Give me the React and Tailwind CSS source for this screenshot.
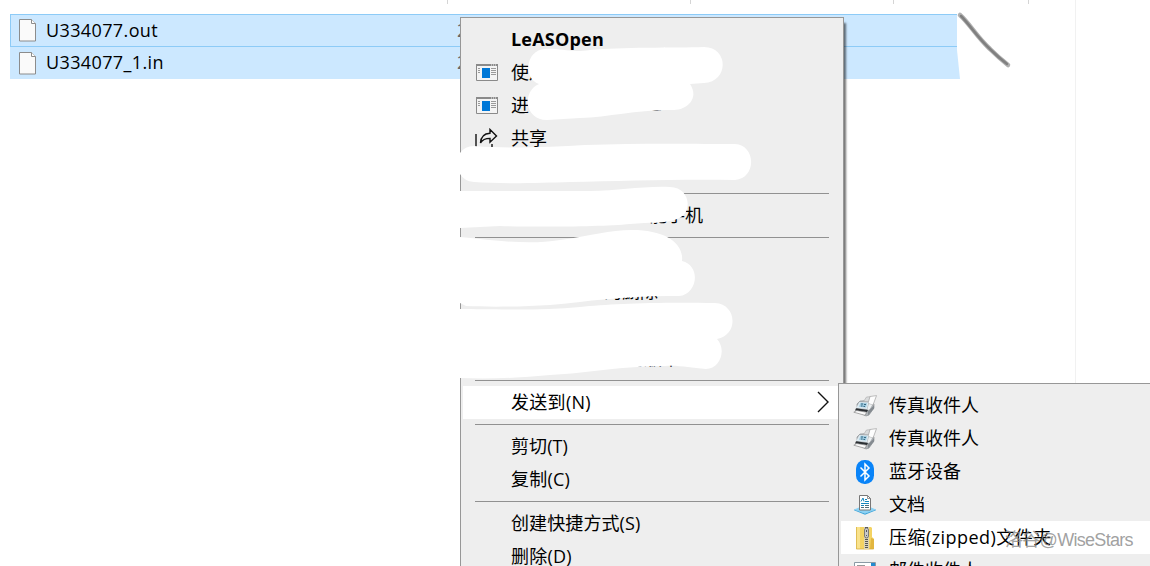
import React from 'react'
import clsx from 'clsx'

const FileIcon = () => (
  <svg width="18" height="23" viewBox="0 0 18 23" fill="none">
    <path d="M.5 .5h12l4 4v17.500H.5z" fill="#fafafa" stroke="#8c8c8c" />
    <path d="M12.500 .5v4h4" fill="#fff" stroke="#8c8c8c" />
  </svg>
)

const WindowIcon = () => (
  <svg width="22" height="17" viewBox="0 0 22 17">
    <path d="M.5 .5h21v16H.5z" fill="#f4f4f4" stroke="#8a8a8a" />
    <path d="M0 0h22v2H0z" fill="#8a8a8a" />
    <path d="M15 1h1m1 0h1m1 0h1" stroke="#eee" />
    <path d="M6 4h8v10H6z" fill="#0078d7" />
    <path d="M2 4.500h2M2 6.500h2M2 8.500h2M15 4.500h5M15 6.500h5M15 8.500h5M15 10.500h5" stroke="#9a9a9a" />
  </svg>
)

const ShareIcon = () => (
  <svg className="-ml-0.5" width="23" height="22" viewBox="0 0 23 22" fill="none" stroke="#111" strokeWidth="1.4">
    <path d="M1 6v15h16v-5" />
    <path d="M15 1.5l6.500 6.500-6.500 6.200v-3.800c-4.200 0-7.500 1-9.500 4.600C5.800 9 9.500 5.500 15 5.200z" />
  </svg>
)

const FaxIcon = () => (
  <svg width="24" height="22" viewBox="0 0 24 22" strokeLinejoin="round">
    <path d="M4 9l3-3 9-.5 5 3.500v4l-5 7-3 1-9-5z" fill="#aeb3b7" stroke="#83888c" strokeWidth=".6" />
    <path d="M10.500 6.500l3-4.500 3.500-.3-1 5z" fill="#d9dbdc" stroke="#aaa" strokeWidth=".6" />
    <path d="M15 8.500l2-7 6.500-.9-3.500 9.500z" fill="#fdfdfd" stroke="#a4a4a4" strokeWidth=".7" />
    <path d="M6.500 7l9 .5-1.500 6.500-11-1z" fill="#dceaf1" />
    <path d="M7.500 7.800l6.500.4-1 4.300-7-.8z" fill="#9bc8de" />
    <path d="M8 9h2m1 .5h2m-5 1.500h1.500m1 .5h1.500" stroke="#2f6078" strokeWidth=".9" />
    <path d="M15.800 9l3.500.8-3 5.200-2-.5z" fill="#edf0f1" />
    <path d="M3 13.200l12 1.800-1 2-12-1.500z" fill="#2b2f33" />
    <path d="M.8 17.200l3-1.700 10 1.800-2 3z" fill="#fafafa" stroke="#777" strokeWidth=".6" />
    <path d="M15 16l6-5.500v3L15 20.500z" fill="#858b90" />
  </svg>
)

const BluetoothIcon = () => (
  <svg width="18" height="24" viewBox="0 0 18 24" fill="none">
    <rect width="18" height="24" rx="8.500" fill="#0a84f8" />
    <path d="M4.500 7.500l8.500 8.500-4 4V4l4 4-8.500 8.500" stroke="#fff" strokeWidth="1.500" />
  </svg>
)

const DocIcon = () => (
  <svg width="22" height="20" viewBox="0 0 22 20">
    <path d="M0 14.500l5-2h12l5 2-11 4z" fill="#8bd2f5" />
    <path d="M0 14.500l11 4 11-4v.8l-11 4.500-11-4.500z" fill="#3aa5dc" />
    <path d="M5.500 .5h8l3 3v11.500h-11z" fill="#fff" stroke="#777" />
    <path d="M13.500 .5v3h3" fill="none" stroke="#777" strokeWidth=".8" />
    <path d="M7 6.500l2-3.500 1 3.500M11 4.500h2M7 8.500h8M11 6.500h4M7 10.500h3" stroke="#1686bd" fill="none" />
    <path d="M11 10.500h4M7 12.500h3M11 12.500h4" stroke="#506c7a" />
  </svg>
)

const ZipIcon = () => (
  <svg width="18" height="24" viewBox="0 0 18 24">
    <path d="M0 1h15l1 1v9l2 2v10H0z" fill="#f4d362" />
    <path d="M0 1h4v22H0z" fill="#f9e28c" />
    <path d="M15 12l3 1v10h-4z" fill="#e2b640" />
    <path d="M.4 1v22H17.600" fill="none" stroke="#d7ae3d" strokeWidth=".8" />
    <path d="M8 1h5v22H8z" fill="#ddd5b5" />
    <path d="M10.500 1v22" stroke="#555" strokeWidth="3" strokeDasharray="1 1" />
    <rect x="8.500" y="2" width="4" height="10" rx="2" fill="#c9c9c9" stroke="#666" strokeWidth=".8" />
    <path d="M10.500 4v2m0 3v1" stroke="#555" />
  </svg>
)

const MailIcon = () => (
  <svg width="22" height="17" viewBox="0 0 22 17">
    <path d="M.5 .5h21v16H.5z" fill="#fff" stroke="#8b9aa5" />
    <path d="M17 1h4v6h-4z" fill="#238bd0" />
    <path d="M3 3.500h8" stroke="#999" />
  </svg>
)

const menuItems = [
  { label: 'LeASOpen', className: 'font-bold tracking-[0.2px]' },
  { label: '使用', icon: <WindowIcon /> },
  { label: '进', icon: <WindowIcon />, tail: '这', tailClass: 'ml-[115px] -mt-1.5' },
  { label: '共享', icon: <ShareIcon /> },
  { label: '' },
  null,
  { label: '', tail: '能手机', tailClass: 'ml-[138px]' },
  null,
  { label: '' },
  { label: '', tail: '上的删除', tailClass: 'ml-[75px] -mt-0.5' },
  { label: '' },
  { label: '', tail: '以前的版本', tailClass: 'ml-[79px]' },
  null,
  { label: '发送到(N)', active: true, className: 'tracking-[0.3px]' },
  null,
  { label: '剪切(T)', className: 'tracking-[0.1px]' },
  { label: '复制(C)', className: 'tracking-[0.2px]' },
  null,
  { label: '创建快捷方式(S)', className: 'tracking-[0.1px]' },
  { label: '删除(D)', className: 'tracking-[0.2px]' },
]

const sendToItems = [
  { label: '传真收件人', icon: <FaxIcon /> },
  { label: '传真收件人', icon: <FaxIcon /> },
  { label: '蓝牙设备', icon: <BluetoothIcon /> },
  { label: '文档', icon: <DocIcon /> },
  { label: '压缩(zipped)文件夹', icon: <ZipIcon />, active: true, className: 'tracking-[0.45px]' },
  { label: '邮件收件人', icon: <MailIcon /> },
]

const MenuItem = ({ item }) => (
  <div className={clsx('flex h-[33px] items-center whitespace-nowrap', item.active && 'bg-white')}>
    <div className="flex w-12 shrink-0 items-center justify-center">{item.icon}</div>
    <span className={clsx('pb-0.5', item.className)}>{item.label}</span>
    {item.tail && <span className={clsx('pb-0.5', item.tailClass)}>{item.tail}</span>}
  </div>
)

const Separator = () => (
  <div className="ml-3 mr-3 flex h-[11px] items-center">
    <div className="h-px w-full bg-[#919191]" />
  </div>
)

const FileRow = ({ name, focused }) => (
  <div
    className={clsx(
      'flex w-[950px] items-center border bg-[#cce8ff] pl-2',
      focused ? 'h-[33px] border-[#8dcbf7]' : 'h-8 border-[#cce8ff]'
    )}
  >
    <FileIcon />
    <span className="ml-[9px] w-[401px] pb-0.5 tracking-[0.38px]">{name}</span>
    <span className="ml-2.5 pb-0.5 text-[#666]">2021</span>
  </div>
)

// hand-painted strokes that cover the private entries
const Redactions = () => (
  <svg className="pointer-events-none absolute inset-0" width="1150" height="566" fill="#fff">
    <path d="M545 49C560 48 570 53 590 50C620 47 675 48 704 47C729 47 729 82 704 83L690 84C700 99 686 110 674 110C640 109 610 117 580 118L547 120C524 120 522 91 539 84C523 79 525 50 545 49Z" />
    <path d="M460 153Q465 146 474 146C510 149 550 147 585 145C640 143 700 144 735 144C756 145 757 178 735 180C680 179 620 181 570 182C540 183 500 184 474 182Q464 181 460 174Z" />
    <path d="M460 191H590C620 191 640 186 670 187C690 187 694 213 677 219C665 224 650 222 630 224C600 227 530 227 500 226L460 228Z" />
    <path d="M460 237C500 241 530 245 560 240C590 236 610 230 632 230C665 230 684 243 682 261C702 266 697 295 679 296C630 295 590 301 550 305C520 307 485 307 466 306L460 303Z" />
    <path d="M460 309C490 309 540 311 580 307C610 304 650 302 715 303C737 304 739 335 717 339C727 350 720 369 706 369C690 368 680 365 665 366C620 366 590 373 550 375C520 378 490 379 460 378Z" />
    <path d="M457 238h5v65h-5zM457 310h5v68h-5zM457 192h5v35h-5zM457 154h5v20h-5z" />
  </svg>
)

const App = () => {
  return (
    <div className="relative h-[566px] w-[1150px] overflow-hidden bg-white font-['Open_Sans','Noto_Sans_CJK_SC',sans-serif] text-[18px] leading-6 text-black">
      <div className="flex h-[566px] w-[1076px] flex-col border-r border-[#f1f1f1]">
        <div className="flex h-1">
          <div className="w-[448px] border-r border-[#d5d5d5]" />
          <div className="w-[243px] border-r border-[#d5d5d5]" />
          <div className="w-[203px] border-r border-[#d5d5d5]" />
          <div className="w-[135px] border-r border-[#d5d5d5]" />
        </div>
        <div className="mt-2.5 pl-2.5">
          <FileRow name="U334077.out" focused />
          <FileRow name="U334077_1.in" />
        </div>
      </div>

      <svg className="absolute left-[950px] top-0" width="70" height="80" fill="none">
        <path d="M7 10H14V79H10L7 50Z" fill="#fff" />
        <path d="M10 15C20 24 26 36 40 49Q48 57 58 65" stroke="#b0b0b0" strokeWidth="4.500" strokeLinecap="round" />
        <path d="M11 16C20 25 27 37 41 50Q48 57 57 64" stroke="#808080" strokeWidth="2.500" strokeLinecap="round" />
      </svg>

      <div className="absolute left-[460px] top-[17px] h-[570px] w-[384px] border border-[#979797] bg-[#eee] px-0.5 py-[5px] shadow-[3px_5px_2px_-1px_rgba(0,0,0,0.55)]">
        {menuItems.map((item, i) => (item ? <MenuItem key={i} item={item} /> : <Separator key={i} />))}
      </div>

      <Redactions />

      <svg className="absolute left-[816px] top-[390px]" width="14" height="24" fill="none" stroke="#111" strokeWidth="1.400">
        <path d="M2 2l10 10L2 22" />
      </svg>

      <div className="absolute left-[838px] top-[383px] w-[330px] border border-[#979797] bg-[#eee] px-0.5 py-[5px]">
        {sendToItems.map((item, i) => (
          <MenuItem key={i} item={item} />
        ))}
      </div>

      <div className="absolute left-[1005px] top-[528px] whitespace-nowrap font-['Liberation_Sans','Noto_Sans_CJK_SC',sans-serif] text-[18px] tracking-[-0.7px] text-[#888]/80">
        洛谷@WiseStars
      </div>
    </div>
  )
}

export default App
